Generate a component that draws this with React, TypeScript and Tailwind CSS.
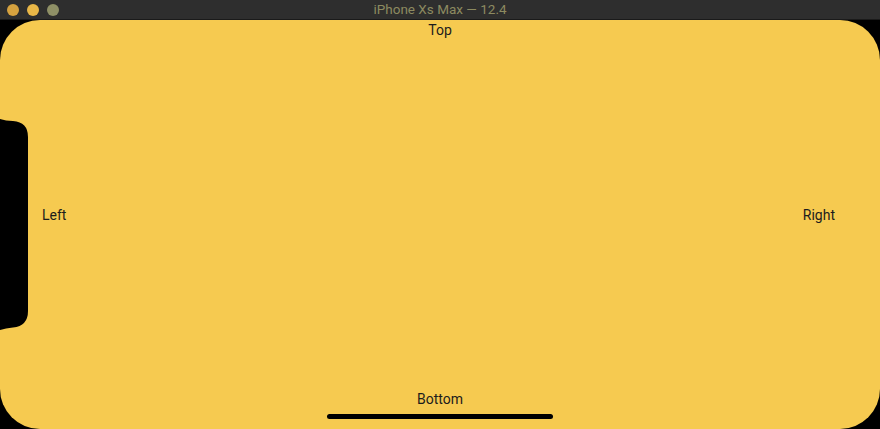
import React from 'react';

const TrafficLights = () => (
  <div className="flex items-center gap-[8px] pl-[7px]">
    <span className="h-[12px] w-[12px] rounded-full bg-[#d6a23f]" />
    <span className="h-[12px] w-[12px] rounded-full bg-[#e9b747]" />
    <span className="h-[12px] w-[12px] rounded-full bg-[#8f9066]" />
  </div>
);

const Notch = () => (
  <svg className="absolute left-0 top-[99px]" width="30" height="211" viewBox="0 0 30 211">
    <path
      d="M0 0 C4 1 8 2 13 2 Q28 3 28 18 L28 192 Q28 207 13 208.5 C8 209 4 210 0 211 Z"
      fill="#000"
    />
  </svg>
);

export default function App() {
  return (
    <div
      className="flex h-[429px] w-[880px] flex-col overflow-hidden bg-black text-[14px] text-[#1c1c1c]"
      style={{ fontFamily: 'Roboto, "Liberation Sans", sans-serif' }}
    >
      <div className="relative flex h-[20px] shrink-0 items-center border-b border-[#1a1a1a] bg-[#2e2e2e]">
        <TrafficLights />
        <span className="absolute inset-x-0 text-center text-[13.5px] text-[#8c8a60]">iPhone Xs Max — 12.4</span>
      </div>
      <div className="relative flex flex-1 flex-col rounded-[40px] bg-[#f6ca50]">
        <div className="flex h-[20px] items-center justify-center">Top</div>
        <div className="flex flex-1 items-center justify-between pl-[42px] pr-[45px]">
          <span>Left</span>
          <span>Right</span>
        </div>
        <div className="flex flex-col items-center pb-[10px]">
          <span className="leading-[18px]">Bottom</span>
          <div className="mt-[6px] h-[5px] w-[226px] rounded-full bg-black" />
        </div>
        <Notch />
      </div>
    </div>
  );
}
